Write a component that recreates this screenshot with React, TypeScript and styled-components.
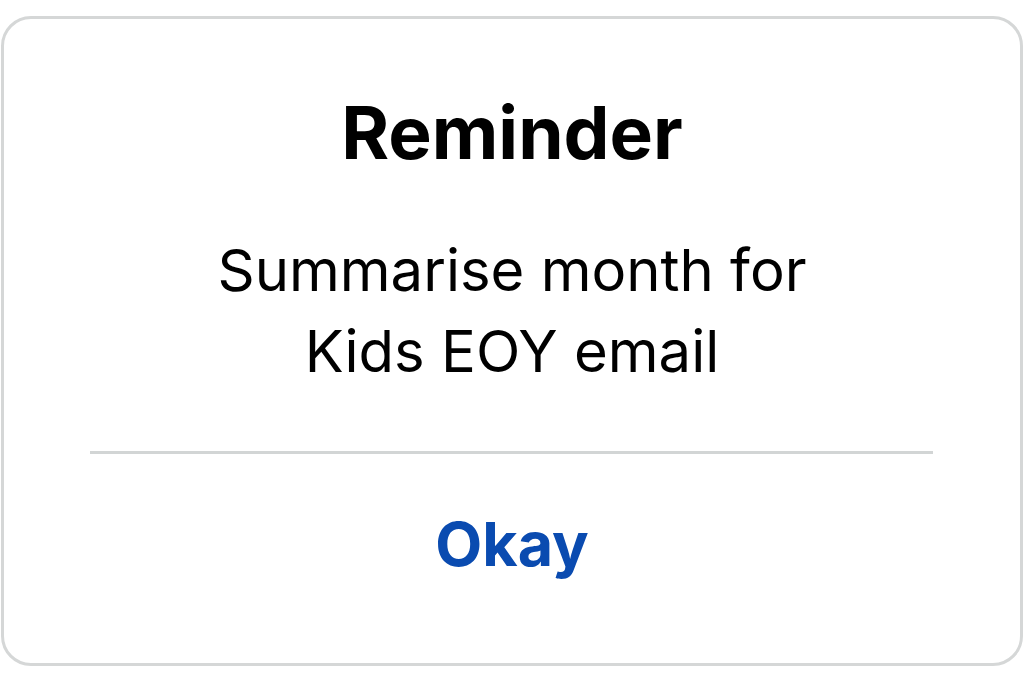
import React from "react";
import styled, { createGlobalStyle } from "styled-components";

const Global = createGlobalStyle`
  html, body { margin: 0; padding: 0; background: #ffffff; }
  body { font-family: Inter, "Noto Sans", sans-serif; }
`;

const Page = styled.div`
  width: 1024px;
  height: 683px;
  box-sizing: border-box;
  padding: 16px 1px 17px 1px;
  display: flex;
`;

const Card = styled.div`
  flex: 1;
  box-sizing: border-box;
  border: 3px solid #d5d7d7;
  border-radius: 30px;
  background: #ffffff;
  display: flex;
  flex-direction: column;
  align-items: center;
  padding-top: 70px;
`;

const Title = styled.h1`
  margin: 0;
  font-family: Inter, sans-serif;
  font-weight: 700;
  font-size: 73px;
  line-height: 88px;
  color: #000000;
`;

const Message = styled.p`
  margin: 53px 0 0 0;
  font-family: Inter, sans-serif;
  font-weight: 400;
  font-size: 58px;
  line-height: 81px;
  color: #000000;
  text-align: center;
`;

const Divider = styled.hr`
  align-self: stretch;
  margin: 59px 87px 0 86px;
  border: none;
  height: 3px;
  background: #d2d5d5;
`;

const ActionButton = styled.button`
  margin-top: 50px;
  padding: 0;
  border: none;
  background: none;
  font-family: Inter, sans-serif;
  font-weight: 700;
  font-size: 61px;
  line-height: 80px;
  color: #0a4bb0;
  cursor: pointer;
`;

export default function App() {
  return (
    <>
      <Global />
      <Page>
        <Card>
          <Title>Reminder</Title>
          <Message>
            Summarise month for
            <br />
            Kids EOY email
          </Message>
          <Divider />
          <ActionButton>Okay</ActionButton>
        </Card>
      </Page>
    </>
  );
}
